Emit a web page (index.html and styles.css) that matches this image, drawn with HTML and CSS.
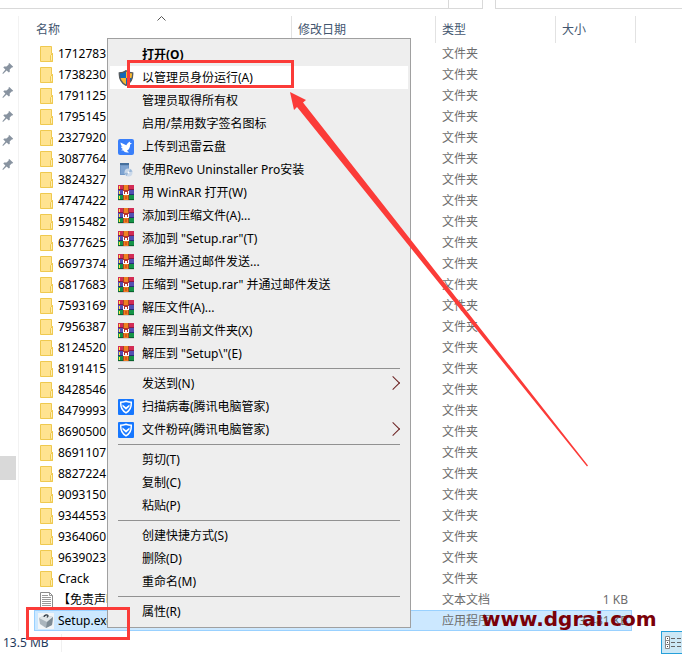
FILE: index.html
```html
<!DOCTYPE html>
<html lang="zh-CN">
<head>
<meta charset="utf-8">
<title>文件资源管理器</title>
<link rel="stylesheet" href="styles.css">
</head>
<body>
<svg class="sprite" aria-hidden="true">
  <symbol id="folder" viewBox="0 0 16 18">
    <path d="M2.500 1.500h11v7h1v8h-12z" fill="#ffe390" stroke="#efc94f"/>
    <path d="M12.500 15.500v-5l2-2v8z" fill="#ffeeb2" stroke="#efc94f"/>
  </symbol>
  <symbol id="pin" viewBox="0 0 12 12">
    <path d="M7.300 1l3.900 3.700-.9.900-.6-.2-2 2.100.1 2.200-.9.900-2.300-2.200L1 12 .4 11.300l3-3.800-2.100-2.100.9-.9 2.300.1 2.200-2-.2-.8z" fill="#8893a0"/>
  </symbol>
  <symbol id="rar" viewBox="0 0 16 16">
    <path d="M0 0h16v5H0z" fill="#d32c55"/><path d="M0 5h16v5H0z" fill="#5350b3"/><path d="M0 10h16v5H0z" fill="#159447"/>
    <path d="M0 4h16v1H0z" fill="#8b1747"/><path d="M0 9h16v1H0z" fill="#292b77"/><path d="M0 14h16v1H0z" fill="#09642e"/>
    <path d="M1 1h1v3H1zM1 6h1v3H1zM1 11h1v3H1z" fill="#ffe449"/>
    <path d="M5 0h6v15H5z" fill="#a5452a"/><path d="M6 0h4v15H6z" fill="#f08022"/>
    <path d="M5 5h6v5H5z" fill="#b8322c"/><path d="M5 6h1v3h1V7h2v2h1V6h1v4H5z" fill="#fff"/>
    <path d="M7 11h2v3H7z" fill="#d65d16"/><path d="M0 15h16v1H0z" fill="#d2d2d2"/>
  </symbol>
  <symbol id="guard" viewBox="0 0 16 16">
    <rect width="16" height="16" rx="1" fill="#1677ff"/>
    <path d="M8 2.200c2 .8 3.700 1.100 5.300 1.100.2 5-1.300 8.500-5.300 10.500-4-2-5.500-5.500-5.300-10.500C4.300 3.300 6 3 8 2.200z" fill="none" stroke="#fff" stroke-width="1.500"/>
    <path d="M4.500 5.500L8 8.300l3.500-2.800v2L8 10.700 4.500 7.500z" fill="#fff"/>
  </symbol>
</svg>

<div class="window">
  <div class="topbar"><div class="address"></div><div class="search"></div></div>
  <main class="content">
    <nav class="side" aria-label="快速访问">
      <div class="pins">
        <svg><use href="#pin"/></svg><svg><use href="#pin"/></svg><svg><use href="#pin"/></svg><svg><use href="#pin"/></svg><svg><use href="#pin"/></svg>
      </div>
      <div class="thumb"></div>
    </nav>
    <table class="files">
      <colgroup><col class="c-name"><col class="c-date"><col class="c-type"><col class="c-size"></colgroup>
      <thead><tr><th>名称<svg class="sort" viewBox="0 0 9 5"><path d="M.5 4.500l4-4 4 4" fill="none" stroke="#555"/></svg></th><th>修改日期</th><th>类型</th><th>大小</th></tr></thead>
      <tbody id="rows"></tbody>
    </table>
  </main>
  <footer class="status">
    <span class="total">13.5 MB</span>
    <button class="view" aria-label="详细信息">
      <svg viewBox="0 0 18 14"><path d="M.5.500h4v12h-4zM.5 4.500h4M.5 8.500h4" fill="#fff" stroke="#888"/><path d="M2 2h1v1H2zM2 6h1v1H2zM2 10h1v1H2z" fill="#444"/><path d="M6 2.500h4m2 0h4M6 6.500h4m2 0h4M6 10.500h4m2 0h4" stroke="#666"/></svg>
    </button>
  </footer>
</div>

<div class="menu" role="menu">
  <button class="item default">打开(O)</button>
  <button class="item active"><svg viewBox="0 0 16 16"><path d="M8 .5C6 2 3.500 2.700 1.300 2.700 1 8.500 3 13 8 15.500c5-2.500 7-7 6.700-12.800C12.500 2.700 10 2 8 .5z" fill="#f8b830"/><path d="M8 .5C6 2 3.500 2.700 1.300 2.700c-.1 2 .1 3.800.7 5.300h6zM8 8h6c-.8 3.500-2.800 6-6 7.500z" fill="#1267b7"/><path d="M8 .7C6 2.200 3.500 2.800 1.300 2.800 1 8.500 3 12.800 8 15.300c5-2.500 7-6.800 6.700-12.500C12.500 2.800 10 2.200 8 .7z" fill="none" stroke="#555b60" stroke-width="1.300"/></svg>以管理员身份运行(A)</button>
  <button class="item">管理员取得所有权</button>
  <button class="item">启用/禁用数字签名图标</button>
  <button class="item"><svg viewBox="0 0 16 16"><rect width="16" height="16" rx="2" fill="#397ffa"/><path d="M2.500 3.500l5.800 2.800c.9-1.500 2.200-3.500 4-3.800l-.4 1.300 2.100.6-1.900 1c.1 2.900-1 5.300-3.200 6.300l2.100 1.500c-2.500.8-4.800-.2-5.700-1.700l-2.300-.3 2-1.100C3.500 9.500 3 8.500 2.900 7.600l1.700.3C3.300 6.800 2.600 5.300 2.500 3.500z" fill="#fff"/></svg>上传到迅雷云盘</button>
  <button class="item"><svg viewBox="0 0 16 16"><path d="M2 1h9v12H2z" fill="#7097c6"/><path d="M2 1h9v2H2z" fill="#456f9d"/><path d="M3 4h7v8H3z" fill="#7fa4d1"/><circle cx="10.500" cy="10.500" r="4" fill="#cbd9ea"/><path d="M10.500 10.500l2-3.500 2 2.500zM10.500 10.500l-2 3.500-2-3z" fill="#9ab7d7"/><circle cx="10.500" cy="10.500" r="1" fill="#fff"/></svg>使用Revo Uninstaller Pro安装</button>
  <button class="item"><svg><use href="#rar"/></svg>用 WinRAR 打开(W)</button>
  <button class="item"><svg><use href="#rar"/></svg>添加到压缩文件(A)...</button>
  <button class="item"><svg><use href="#rar"/></svg>添加到 "Setup.rar"(T)</button>
  <button class="item"><svg><use href="#rar"/></svg>压缩并通过邮件发送...</button>
  <button class="item"><svg><use href="#rar"/></svg>压缩到 "Setup.rar" 并通过邮件发送</button>
  <button class="item"><svg><use href="#rar"/></svg>解压文件(A)...</button>
  <button class="item"><svg><use href="#rar"/></svg>解压到当前文件夹(X)</button>
  <button class="item"><svg><use href="#rar"/></svg>解压到 "Setup\"(E)</button>
  <hr>
  <button class="item sub">发送到(N)</button>
  <button class="item"><svg><use href="#guard"/></svg>扫描病毒(腾讯电脑管家)</button>
  <button class="item sub"><svg><use href="#guard"/></svg>文件粉碎(腾讯电脑管家)</button>
  <hr>
  <button class="item">剪切(T)</button>
  <button class="item">复制(C)</button>
  <button class="item">粘贴(P)</button>
  <hr>
  <button class="item">创建快捷方式(S)</button>
  <button class="item">删除(D)</button>
  <button class="item">重命名(M)</button>
  <hr>
  <button class="item">属性(R)</button>
</div>

<div class="mark mark-run"></div>
<div class="mark mark-file"></div>
<svg class="arrow" viewBox="0 0 298 375"><path d="M0 0l16 8-3 2.500L298 373.500l-1 1L7 15l-3 3z" fill="#fb3b38"/></svg>
<div class="watermark">www.dgrai.com</div>
<script src="files.js"></script>
</body>
</html>
```
FILE: styles.css
```css
* { box-sizing: border-box; }
body {
  margin: 0;
  background: #fff;
  color: #000;
  font: 12px/20px "Noto Sans", "Noto Sans CJK SC", sans-serif;
  overflow: hidden;
}
button { font: inherit; color: inherit; border: 0; border-radius: 0; padding: 0; background: none; text-align: left; }
.sprite { display: none; }
.window { display: flex; flex-direction: column; min-height: 100vh; }

.topbar { display: flex; gap: 12px; height: 9px; }
.address { flex: 0 0 483px; border: solid #d9d9d9; border-width: 0 1px 1px 0; padding-right: 33px; }
.address::before { content: ""; display: block; height: 100%; border-right: 1px solid #d9d9d9; }
.search { flex: 1; border: solid #d9d9d9; border-width: 0 0 1px 1px; }

.content { display: flex; margin-top: 7px; }
.side { flex: 0 0 19px; border-right: 1px solid #f2f2f2; }
.pins { display: grid; gap: 12px; padding: 46px 0 0 2px; }
.pins svg { display: block; width: 12px; height: 12px; }
.thumb { width: 16px; height: 24px; margin-top: 286px; background: #d9d9d9; }

.files { flex: 0 0 auto; width: 598px; margin-left: 15px; border-spacing: 0; table-layout: fixed; }
.c-name { width: 258px; }
.c-date { width: 144px; }
.c-type { width: 120px; }
.c-size { width: 76px; }
th {
  position: relative;
  height: 27px;
  padding: 0 0 0 6px;
  border-right: 1px solid #e2e2e2;
  color: #43566f;
  font-weight: 400;
  text-align: left;
}
th:first-child { padding-left: 2px; }
th:last-child { border-right: 0; }
th:last-child::after { content: ""; position: absolute; top: 0; right: -4px; width: 1px; height: 100%; background: #e2e2e2; }
.sort { position: absolute; left: 123px; top: 0; width: 9px; height: 5px; }
td { height: 21px; padding: 0 0 0 6px; line-height: 19px; color: #6d6d6d; white-space: nowrap; overflow: hidden; }
td:first-child { padding-left: 3px; color: #000; }
td:last-child { padding: 0 4px 0 0; text-align: right; }
.name { display: flex; align-items: center; gap: 3px; }
.name svg { width: 18px; height: 18px; }
.selected td { background: #cce8ff; border: solid #99d1ff; border-width: 1px 0; }
.selected td:first-child { border-left-width: 1px; padding-left: 2px; }
.selected td:last-child { border-right-width: 1px; padding-right: 3px; }

.status { display: flex; justify-content: space-between; align-items: flex-start; height: 25px; }
.total { margin: 3px 0 0 3px; padding-right: 12px; line-height: 18px; color: #1e395b; border-right: 1px solid #f0f0f0; }
.view { width: 21px; height: 23px; padding-left: 3px; background: #cce8f6; border: solid #26a0da; border-width: 1px 0 1px 1px; overflow: hidden; }
.view svg { display: block; width: 18px; height: 14px; }

.menu {
  position: absolute;
  left: 107px;
  top: 38px;
  width: 304px;
  padding: 4px 2px;
  background: #eee;
  border: 1px solid #a0a0a0;
}
.item { display: flex; align-items: center; width: 100%; height: 23px; padding-left: 32px; white-space: nowrap; }
.item svg { width: 16px; height: 16px; margin: 0 8px 0 -24px; }
.default { font-weight: 700; }
.active { background: #fff; }
.sub::after {
  content: "";
  width: 9px;
  height: 9px;
  margin: 0 10px 2px auto;
  border: solid #6b2020;
  border-width: 1px 1px 0 0;
  transform: rotate(45deg);
}
hr { height: 1px; margin: 3px 8px; border: 0; background: #919191; }

.mark { position: absolute; border: 3px solid #fb3b38; }
.mark-run { left: 127px; top: 60px; width: 167px; height: 28px; }
.mark-file { left: 26px; top: 607px; width: 104px; height: 33px; }
.arrow { position: absolute; left: 290px; top: 92px; width: 298px; height: 375px; }
.watermark { position: absolute; left: 482px; top: 607px; font: 700 20px/24px "DejaVu Sans", sans-serif; color: #7a0008; }
```
FILE: files.js
```js
const folders = "1712783 1738230 1791125 1795145 2327920 3087764 3824327 4747422 5915482 6377625 6697374 6817683 7593169 7956387 8124520 8191415 8428546 8479993 8690500 8691107 8827224 9093150 9344553 9364060 9639023 Crack".split(" ");
const icons = {
  folder: '<svg><use href="#folder"/></svg>',
  text: '<svg viewBox="0 0 18 18"><path d="M3.500 1.500h9l3 3v12h-12z" fill="#fff" stroke="#8b8b8b"/><path d="M12.500 1.500v3h3M5 4.500h6M5 6.500h9M5 8.500h9M5 10.500h9M5 12.500h9M5 14.500h9" fill="none" stroke="#999"/></svg>',
  setup: '<svg viewBox="0 0 18 18"><path d="M1 1h16v16H1z" fill="#f2f5f7"/><path d="M2 6l6-3 8 2-1 8-6 3-6-4z" fill="#aab5bd"/><path d="M2 6l6-3 8 2-6 5z" fill="#dfe5e8"/><path d="M10 10l6-5-1 8-6 3z" fill="#7e8b94"/><path d="M7 5c0-2 4-3 4-1l-1 1.500" fill="none" stroke="#39434b" stroke-width="1.300"/></svg>'
};
const files = folders.map(name => [name, "文件夹", "", "folder"]);
files.push(["【免责声明】", "文本文档", "1 KB", "text"], ["Setup.exe", "应用程序", "3,481 KB", "setup"]);
document.getElementById("rows").innerHTML = files.map(([name, type, size, icon]) =>
  `<tr${icon === "setup" ? ' class="selected"' : ""}><td><div class="name">${icons[icon]}${name}</div></td><td></td><td>${type}</td><td>${size}</td></tr>`
).join("");
```
